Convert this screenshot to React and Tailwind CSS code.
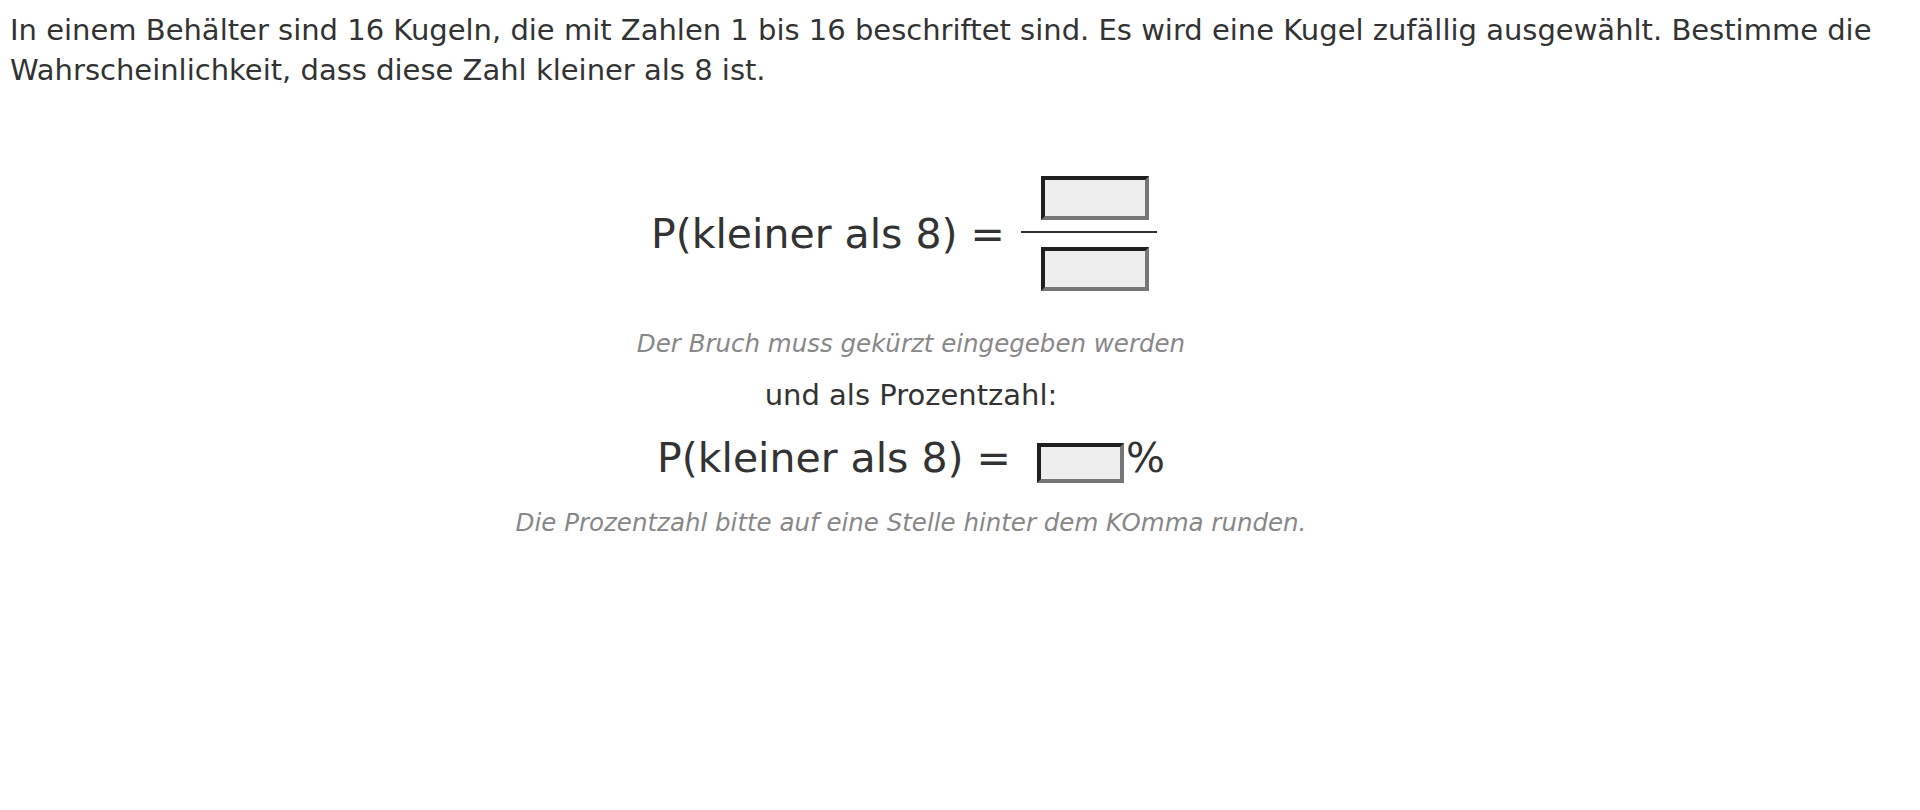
import React from 'react'

// Inset-looking answer box, like the old-school input fields in the task page.
function AnswerBox({ className = '' }) {
  return (
    <input
      type="text"
      aria-label="Antwort"
      className={`box-border bg-[#eeeeee] border-[4px] border-t-[#1f1f1f] border-l-[#1f1f1f] border-b-[#767676] border-r-[#767676] outline-none ${className}`}
    />
  )
}

export default function App() {
  return (
    <div className="min-h-screen bg-white text-[#333333] font-['DejaVu_Sans','Verdana',sans-serif]">
      <p className="pl-[10px] pt-[10px] text-[29px] leading-[40px]">
        In einem Behälter sind 16 Kugeln, die mit Zahlen 1 bis 16 beschriftet sind. Es wird eine Kugel zufällig
        ausgewählt. Bestimme die Wahrscheinlichkeit, dass diese Zahl kleiner als 8 ist.
      </p>

      <div className="w-[1822px] flex flex-col items-center mt-[86px]">
        {/* fraction answer */}
        <div className="flex items-center gap-[16px] pr-[14px]">
          <span className="text-[41px] leading-[normal]">P(kleiner als 8) =</span>
          <div className="flex flex-col w-[136px]">
            <AnswerBox className="ml-[20px] w-[108px] h-[44px]" />
            <div className="mt-[11px] mb-[14px] h-[2px] bg-[#333333]" />
            <AnswerBox className="ml-[20px] w-[108px] h-[44px]" />
          </div>
        </div>

        <p className="mt-[38px] text-[24.5px] leading-[normal] italic text-[#888888]">
          Der Bruch muss gekürzt eingegeben werden
        </p>

        <p className="mt-[20px] text-[29px] leading-[normal]">und als Prozentzahl:</p>

        {/* percent answer */}
        <div className="mt-[21px] flex items-center">
          <span className="text-[41px] leading-[normal]">P(kleiner als 8) =</span>
          <AnswerBox className="ml-[26px] mt-[10px] w-[87px] h-[40px]" />
          <span className="ml-[2px] text-[41px] leading-[normal]">%</span>
        </div>

        <p className="mt-[25px] text-[24.5px] leading-[normal] italic text-[#888888]">
          Die Prozentzahl bitte auf eine Stelle hinter dem KOmma runden.
        </p>
      </div>
    </div>
  )
}
